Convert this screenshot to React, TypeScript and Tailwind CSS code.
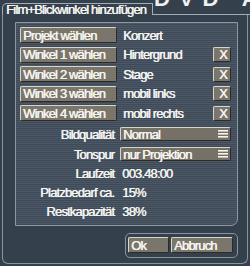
import React from 'react';

const font = "font-['Liberation_Sans',Arial,sans-serif] text-[13px] tracking-[-0.85px] leading-none";
const bold = '[text-shadow:0.5px_0_0_#f4f4f0]';

function Btn({ children, className = '' }: { children: React.ReactNode; className?: string }) {
  return (
    <div
      className={`flex items-center rounded-[2px] border border-t-[#d9d5c8] border-l-[#d9d5c8] border-b-[#2c2b27] border-r-[#2c2b27] bg-[#7b766b] pl-[2px] text-[#f6f5ef] ${bold} ${className}`}
    >
      {children}
    </div>
  );
}

function Menu() {
  return (
    <svg width="10" height="8" viewBox="0 0 10 8" className="mr-[2px] shrink-0">
      <rect x="0" y="0" width="10" height="1.6" fill="#f2f2ee" />
      <rect x="0" y="3" width="10" height="1.6" fill="#f2f2ee" />
      <rect x="0" y="6" width="10" height="1.6" fill="#f2f2ee" />
    </svg>
  );
}

const angles = [
  ['Winkel 1 wählen', 'Hintergrund'],
  ['Winkel 2 wählen', 'Stage'],
  ['Winkel 3 wählen', 'mobil links'],
  ['Winkel 4 wählen', 'mobil rechts'],
];

const selects = [
  ['Bildqualität', 'Normal'],
  ['Tonspur', 'nur Projektion'],
];

const infos = [
  ['Laufzeit', '003.48:00'],
  ['Platzbedarf ca.', '15%'],
  ['Restkapazität', '38%'],
];

export default function App() {
  return (
    <div className={`relative h-[266px] w-[250px] overflow-hidden bg-[#34404b] text-[#f4f4f0] ${font}`}>
      <div className="absolute left-[154px] top-[-12px] whitespace-nowrap text-[22px] leading-[22px] font-bold tracking-[9px] text-[#eef0f2]">
        DVD Arc
      </div>

      <div className="flex h-[15px] pl-[2px] pt-[3px]">
        <div className={`flex h-[12px] w-[151px] items-end rounded-tl-[5px] border-l border-r border-t border-[#a3adb7] bg-[#34404b] pl-[3px] ${bold}`}>
          <span className="translate-y-[1px]">Film+Blickwinkel hinzufügen</span>
        </div>
        <div className="flex-1 border-b border-[#a3adb7]" />
      </div>

      <div className="ml-[2px] h-[249px] w-[246px] rounded-b-[6px] border-b border-l border-r border-[#8894a0] pl-[12px] pr-[9px] pt-[7px]">
        <div className="flex h-[204px] flex-col rounded-br-[7px] border border-[#8c98a4] bg-[repeating-linear-gradient(180deg,#4c5866_0px,#4c5866_1px,#3e4a57_1px,#3e4a57_2px)] pl-[4px] pr-[6px] pt-[4px]">
          <div className="flex flex-col gap-[3.5px]">
            <div className="flex h-[16px] items-center">
              <Btn className="h-[16px] w-[97px]">Projekt wählen</Btn>
              <span className={`ml-[6px] ${bold}`}>Konzert</span>
            </div>
            {angles.map(([label, value]) => (
              <div key={label} className="flex h-[16px] items-center">
                <Btn className="h-[16px] w-[97px]">{label}</Btn>
                <span className={`ml-[6px] flex-1 ${bold}`}>{value}</span>
                <Btn className="h-[15px] w-[18px] justify-center pl-0">X</Btn>
              </div>
            ))}
          </div>

          <div className="mt-[6px] flex flex-col gap-[6px]">
            {selects.map(([label, value]) => (
              <div key={label} className="flex h-[14px] items-center">
                <span className={`w-[94px] text-right ${bold}`}>{label}</span>
                <Btn className="ml-[6px] h-[14px] flex-1 justify-between bg-[#767166]">
                  <span>{value}</span>
                  <Menu />
                </Btn>
              </div>
            ))}
          </div>

          <div className="mt-[7px] flex flex-col gap-[9px]">
            {infos.map(([label, value]) => (
              <div key={label} className="flex h-[10px] items-center">
                <span className={`w-[94px] text-right ${bold}`}>{label}</span>
                <span className={`ml-[8px] ${bold}`}>{value}</span>
              </div>
            ))}
          </div>
        </div>

        <div className="ml-[110px] mt-[7px] flex h-[25px] w-[113px] gap-[2px] rounded-[5px] border border-[#8894a0] pl-[2px] pt-[3px]">
          <Btn className="h-[16px] w-[41px]">Ok</Btn>
          <Btn className="h-[16px] w-[62px]">Abbruch</Btn>
        </div>
      </div>
    </div>
  );
}
